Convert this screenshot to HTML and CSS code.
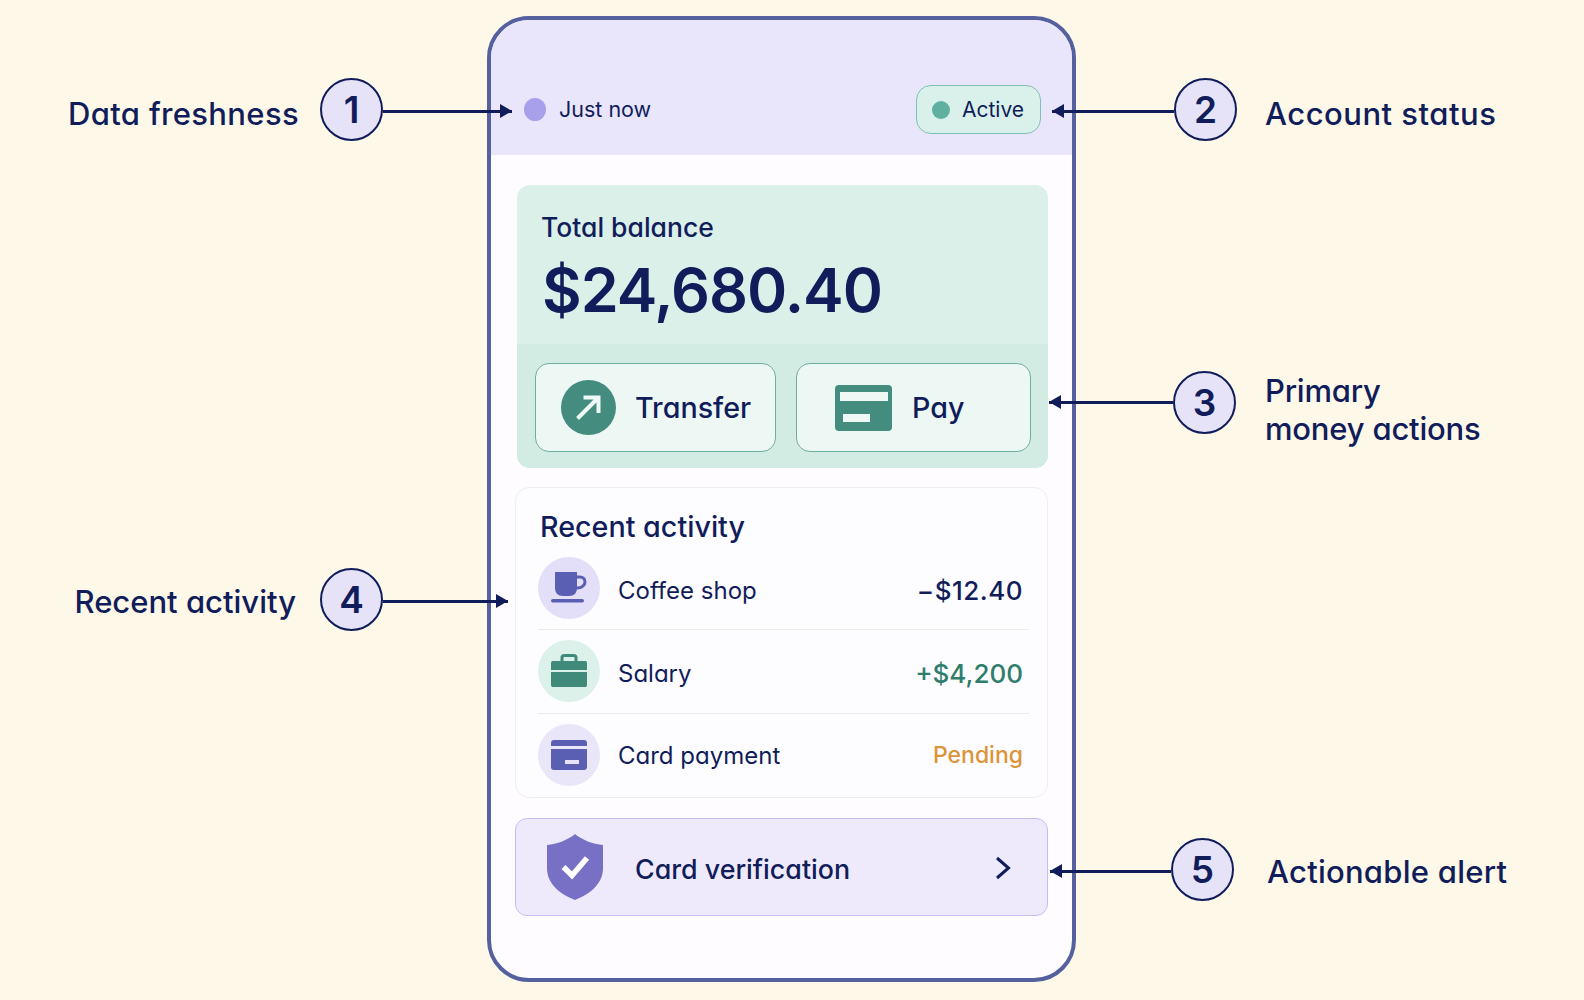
FILE: index.html
```html
<!DOCTYPE html>
<html>
<head>
<meta charset="utf-8">
<title>Wallet home</title>
<link rel="stylesheet" href="styles.css">
</head>
<body>
<div class="stage">

  <div class="phone">
    <header class="status-bar">
      <div class="fresh"><span class="fresh-dot"></span>Just now</div>
      <div class="pill"><span class="pill-dot"></span>Active</div>
    </header>

    <main class="content">
      <section class="balance">
        <div class="balance-top">
          <div class="balance-label">Total balance</div>
          <div class="balance-value">$24,680.40</div>
        </div>
        <div class="actions">
          <button class="action action-transfer">
            <svg class="icon-transfer" viewBox="0 0 55 55">
              <circle cx="27.5" cy="27.5" r="27.5" fill="#448c7e"/>
              <path d="M16.5 38.5 36 19M22.5 17.5H37.5V33" fill="none" stroke="#eef8f5" stroke-width="4"/>
            </svg>
            Transfer
          </button>
          <button class="action action-pay">
            <svg class="icon-pay" viewBox="0 0 57 46">
              <rect width="57" height="46" rx="4" fill="#448c7e"/>
              <rect x="5" y="7" width="48" height="9" fill="#eef8f5"/>
              <rect x="8" y="29" width="27" height="8" fill="#eef8f5"/>
            </svg>
            Pay
          </button>
        </div>
      </section>

      <section class="activity">
        <h2 class="activity-title">Recent activity</h2>
        <div class="row">
          <span class="row-icon purple">
            <svg viewBox="0 0 36 32" width="36" height="32">
              <path d="M4 0H26V16C26 21 23 24 18 24H12C7 24 4 21 4 16Z" fill="#5a5fb4"/>
              <path d="M26 5H29C32 5 34 7 34 10 34 13 31 16 26 16" fill="none" stroke="#5a5fb4" stroke-width="3"/>
              <rect x="0" y="27" width="33" height="3.500" rx="1.700" fill="#5a5fb4"/>
            </svg>
          </span>
          <span class="row-name">Coffee shop</span>
          <span class="row-amount">−$12.40</span>
        </div>
        <div class="row">
          <span class="row-icon green">
            <svg viewBox="0 0 36 34" width="36" height="34">
              <path d="M11 8V3.500C11 2 12 1.500 13.500 1.500H22.500C24 1.500 25 2 25 3.500V8" fill="none" stroke="#3f8a78" stroke-width="3"/>
              <path d="M0 9C0 7.500 1 7 2 7H34C35 7 36 7.500 36 9V16H0Z" fill="#3f8a78"/>
              <path d="M0 18H36V31C36 32.500 35 33 34 33H2C1 33 0 32.500 0 31Z" fill="#3f8a78"/>
            </svg>
          </span>
          <span class="row-name">Salary</span>
          <span class="row-amount income">+$4,200</span>
        </div>
        <div class="row">
          <span class="row-icon lilac">
            <svg viewBox="0 0 36 30" width="36" height="30">
              <path d="M0 3C0 1 1 0 3 0H33C35 0 36 1 36 3V6H0Z" fill="#5a5fb4"/>
              <path d="M0 9H36V27C36 29 35 30 33 30H3C1 30 0 29 0 27Z" fill="#5a5fb4"/>
              <rect x="14" y="20" width="14" height="4" fill="#e6e3f8"/>
            </svg>
          </span>
          <span class="row-name">Card payment</span>
          <span class="row-amount pending">Pending</span>
        </div>
      </section>

      <section class="alert">
        <svg class="shield" viewBox="0 0 56 66">
          <path d="M28 0C35 6 46 10 56 11V34C56 50 43 60 28 66 13 60 0 50 0 34V11C10 10 21 6 28 0Z" fill="#7870c4"/>
          <path d="M16.500 33 25 41.500 40 24" fill="none" stroke="#fff" stroke-width="5.500"/>
        </svg>
        <span class="alert-text">Card verification</span>
        <svg class="chevron" viewBox="0 0 16 24">
          <path d="M2 2 13.500 12 2 22" fill="none" stroke="#111d5a" stroke-width="3"/>
        </svg>
      </section>
    </main>
  </div>

  <!-- callouts, placed on the canvas next to what they point at -->
  <div class="callout left c1">
    <span class="label">Data freshness</span>
    <span class="badge">1</span>
    <span class="line"></span>
  </div>
  <div class="callout right c2">
    <span class="line"></span>
    <span class="badge">2</span>
    <span class="label">Account status</span>
  </div>
  <div class="callout right c3">
    <span class="line"></span>
    <span class="badge">3</span>
    <span class="label two">Primary<br>money actions</span>
  </div>
  <div class="callout left c4">
    <span class="label">Recent activity</span>
    <span class="badge">4</span>
    <span class="line"></span>
  </div>
  <div class="callout right c5">
    <span class="line"></span>
    <span class="badge">5</span>
    <span class="label">Actionable alert</span>
  </div>

</div>
</body>
</html>
```

FILE: styles.css
```css
* {
  box-sizing: border-box;
}
body {
  margin: 0;
  background: #fef8e9;
  color: #111d5a;
  font-family: "Inter", "Noto Sans", sans-serif;
  font-feature-settings: "cv11";
}
.stage {
  position: relative;
  width: 1584px;
  height: 1000px;
  padding: 16px 0 0 487px;
  overflow: hidden;
}

/* phone */
.phone {
  width: 589px;
  height: 966px;
  border: 4px solid #55609f;
  border-radius: 42px;
  background: #fefcff;
  overflow: hidden;
}
.status-bar {
  height: 135px;
  padding: 0 31px 21px 33px;
  background: #e9e5fa;
  display: flex;
  align-items: flex-end;
  justify-content: space-between;
}
.fresh {
  height: 48px;
  display: flex;
  align-items: center;
  gap: 13px;
  font-size: 21.500px;
  padding-bottom: 2px;
}
.fresh-dot {
  width: 22px;
  height: 23px;
  border-radius: 50%;
  background: #a9a0ec;
}
.pill {
  width: 125px;
  height: 49px;
  padding-left: 15px;
  display: flex;
  align-items: center;
  gap: 12px;
  font-size: 21px;
  background: #d9f1ea;
  border: 1.5px solid #7fc0b2;
  border-radius: 15px;
}
.pill-dot {
  width: 18px;
  height: 18px;
  border-radius: 50%;
  background: #5fb09e;
}
.content {
  padding: 30px 24px 0;
}

/* balance */
.balance {
  margin-left: 2px;
  height: 283px;
  border-radius: 13px;
  background: #dbf0e9;
  overflow: hidden;
}
.balance-top {
  height: 159px;
  padding: 24px 0 0 24px;
}
.balance-label {
  font-size: 26.500px;
  font-weight: 500;
  line-height: 36px;
}
.balance-value {
  margin: 9px 0 0 1px;
  font-size: 61px;
  font-weight: 600;
  line-height: 72px;
  letter-spacing: -1px;
}
.actions {
  height: 124px;
  padding: 19px 17px 0 18px;
  background: #d2ece4;
  display: flex;
  gap: 20px;
}
.action {
  height: 89px;
  display: flex;
  align-items: center;
  padding: 0;
  font-family: inherit;
  font-feature-settings: inherit;
  font-size: 28.700px;
  font-weight: 500;
  color: #111d5a;
  background: #edf7f4;
  border: 1.5px solid #6daea0;
  border-radius: 14px;
}
.action-transfer {
  width: 241px;
  padding-left: 25px;
  gap: 19px;
}
.action-pay {
  width: 235px;
  padding-left: 38px;
  gap: 20px;
}
.icon-transfer {
  width: 55px;
  height: 55px;
}
.icon-pay {
  width: 57px;
  height: 46px;
}

/* activity */
.activity {
  margin-top: 19px;
  height: 311px;
  padding: 0 18px 0 22px;
  background: #fdfcff;
  border: 1.5px solid #eeecf4;
  border-radius: 14px;
}
.activity-title {
  margin: 0;
  height: 58.500px;
  padding-top: 20px;
  padding-left: 2px;
  font-size: 28.700px;
  font-weight: 500;
  line-height: 38px;
}
.row {
  height: 83.500px;
  display: flex;
  align-items: center;
  border-bottom: 1.5px solid #ebe9f1;
}
.row:last-child {
  border-bottom: 0;
}
.row-icon {
  width: 62px;
  height: 62px;
  border-radius: 50%;
  display: flex;
  align-items: center;
  justify-content: center;
  flex: none;
}
.row-icon.purple {
  background: #e4dff8;
}
.row-icon.green {
  background: #dcf1ea;
}
.row-icon.lilac {
  background: #e9e6f9;
}
.row-name {
  margin-left: 18px;
  padding-top: 5px;
  font-size: 24px;
  flex: 1;
}
.row-amount {
  margin-right: 6px;
  padding-top: 5px;
  font-size: 26px;
  font-weight: 500;
  letter-spacing: 0.5px;
}
.row:last-child .row-name,
.row:last-child .row-amount {
  padding-top: 0;
}
.income {
  color: #2f7d6b;
  letter-spacing: 0;
}
.pending {
  color: #dc9438;
  font-size: 23px;
  letter-spacing: 0;
}

/* alert */
.alert {
  margin-top: 20px;
  height: 98px;
  padding: 0 36px 0 31px;
  display: flex;
  align-items: center;
  background: #eeeafb;
  border: 1.5px solid #c5bdf0;
  border-radius: 12px;
}
.shield {
  width: 56px;
  height: 66px;
  flex: none;
}
.alert-text {
  margin-left: 32px;
  padding-top: 4px;
  font-size: 26.800px;
  font-weight: 500;
  flex: 1;
}
.chevron {
  width: 16px;
  height: 24px;
  margin-top: 2px;
}

/* callouts */
.callout {
  position: absolute;
  display: flex;
  align-items: center;
}
.callout.left {
  justify-content: flex-end;
}
.badge {
  width: 63px;
  height: 63px;
  flex: none;
  display: flex;
  align-items: center;
  justify-content: center;
  font-size: 37px;
  font-weight: 600;
  background: #e6e3f8;
  border: 2px solid #111d5a;
  border-radius: 50%;
}
.label {
  font-size: 31px;
  font-weight: 500;
  white-space: nowrap;
  padding-top: 8px;
}
.label.two {
  padding-top: 0;
  line-height: 38px;
  letter-spacing: -0.200px;
}
.left .label {
  margin-right: 21px;
}
.right .label {
  margin-left: 28px;
}
.line {
  position: relative;
  height: 3px;
  background: #111d5a;
  margin-top: 4px;
}
.line::after {
  content: "";
  position: absolute;
  top: -6px;
  border-top: 7.500px solid transparent;
  border-bottom: 7.500px solid transparent;
}
.left .line::after {
  right: 0;
  border-left: 12px solid #111d5a;
}
.right .line::after {
  left: 0;
  border-right: 12px solid #111d5a;
}
.c1 {
  right: 1072px;
  top: 78px;
}
.c1 .line {
  width: 129px;
}
.c1 .label {
  letter-spacing: 0.350px;
}
.c4 {
  right: 1076px;
  top: 568px;
}
.c4 .line {
  width: 125px;
}
.c4 .label {
  margin-right: 24px;
  padding-top: 4px;
}
.c2 {
  left: 1052px;
  top: 78px;
}
.c2 .line {
  width: 122px;
}
.c2 .label {
  letter-spacing: 0.500px;
}
.c3 {
  left: 1049px;
  top: 372px;
}
.c3 .line {
  width: 124px;
  margin-top: -16px;
}
.c3 .badge {
  margin-top: -16px;
}
.c3 .label {
  margin-left: 29px;
}
.c5 {
  left: 1050px;
  top: 838px;
}
.c5 .line {
  width: 121px;
}
.c5 .label {
  margin-left: 33px;
  padding-top: 4px;
  letter-spacing: 0.250px;
}
```
